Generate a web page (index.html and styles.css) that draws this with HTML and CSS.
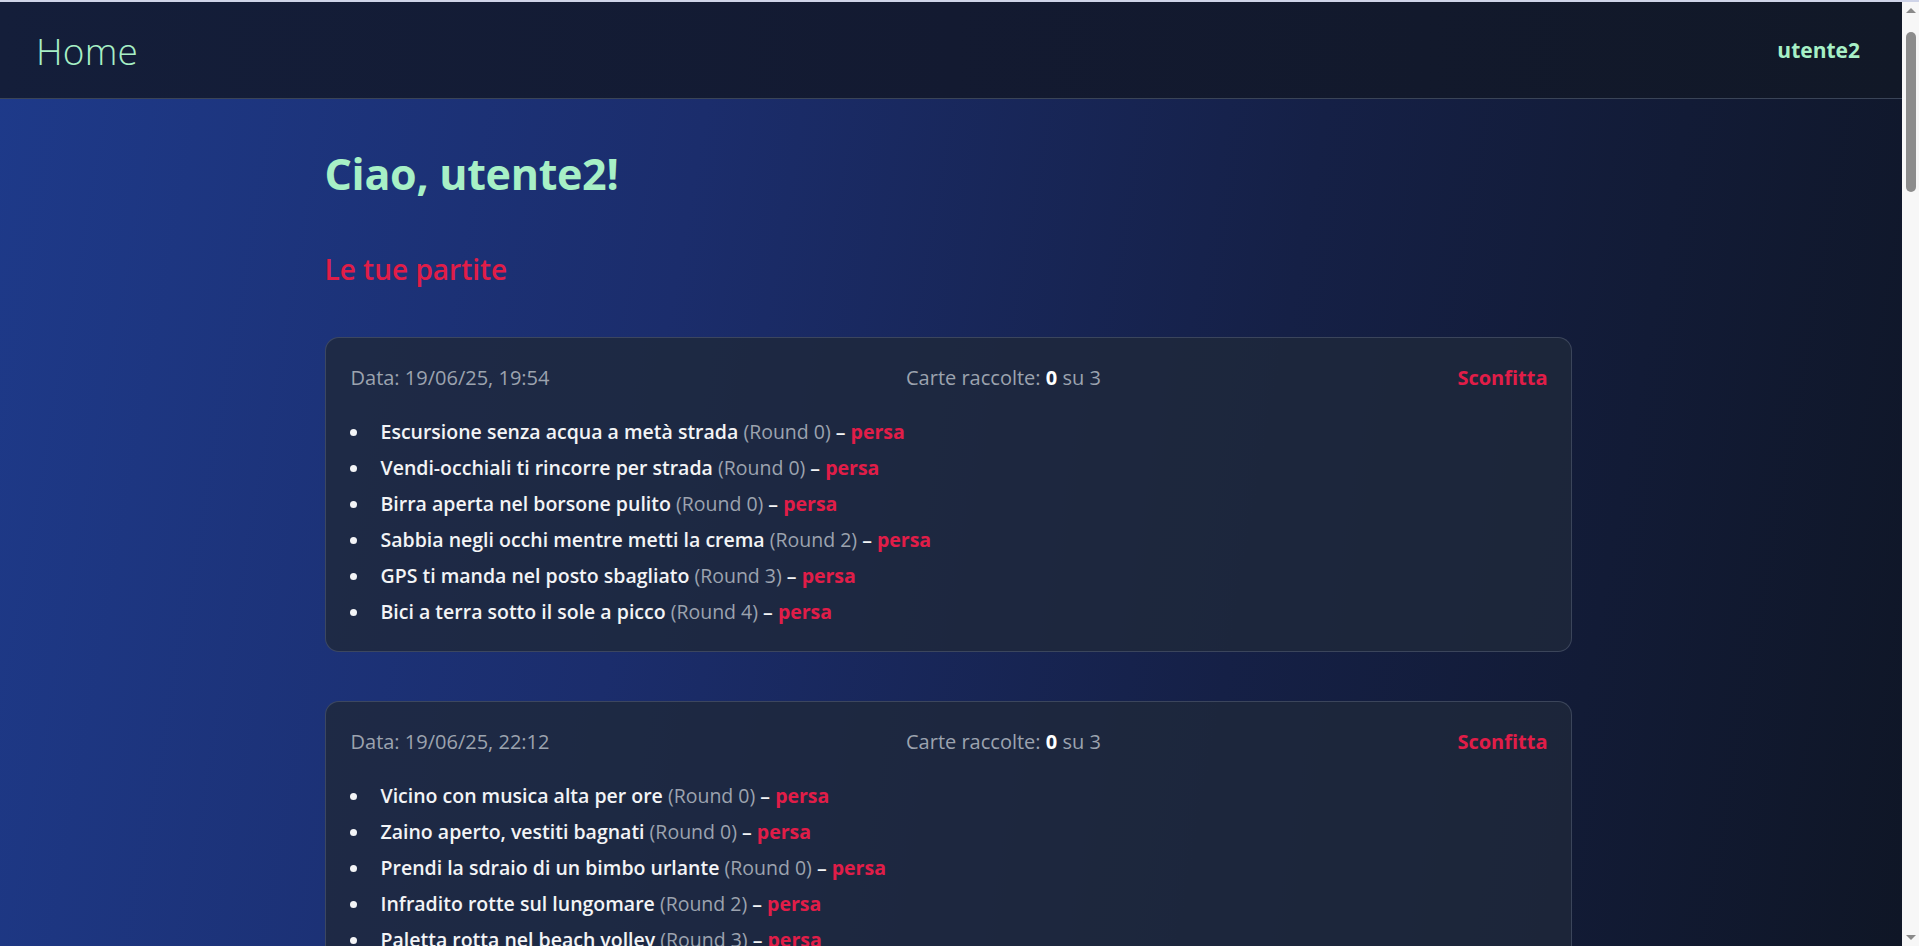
FILE: index.html
```html
<!DOCTYPE html>
<html lang="it">
<head>
<meta charset="utf-8">
<title>Home</title>
<link rel="stylesheet" href="styles.css">
</head>
<body>
<div class="app">
<header class="topbar">
  <a class="brand" href="#">Home</a>
  <span class="user">utente2</span>
</header>
<main class="container">
  <h1 class="title">Ciao, utente2!</h1>
  <h2 class="subtitle">Le tue partite</h2>

  <section class="game">
    <div class="game-head">
      <span class="muted">Data: 19/06/25, 19:54</span>
      <span class="muted">Carte raccolte: <b class="count">0</b> su 3</span>
      <span class="result">Sconfitta</span>
    </div>
    <ul class="cards">
      <li>Escursione senza acqua a metà strada <span class="round">(Round 0)</span> – <span class="lost">persa</span></li>
      <li>Vendi-occhiali ti rincorre per strada <span class="round">(Round 0)</span> – <span class="lost">persa</span></li>
      <li>Birra aperta nel borsone pulito <span class="round">(Round 0)</span> – <span class="lost">persa</span></li>
      <li>Sabbia negli occhi mentre metti la crema <span class="round">(Round 2)</span> – <span class="lost">persa</span></li>
      <li>GPS ti manda nel posto sbagliato <span class="round">(Round 3)</span> – <span class="lost">persa</span></li>
      <li>Bici a terra sotto il sole a picco <span class="round">(Round 4)</span> – <span class="lost">persa</span></li>
    </ul>
  </section>

  <section class="game">
    <div class="game-head">
      <span class="muted">Data: 19/06/25, 22:12</span>
      <span class="muted">Carte raccolte: <b class="count">0</b> su 3</span>
      <span class="result">Sconfitta</span>
    </div>
    <ul class="cards">
      <li>Vicino con musica alta per ore <span class="round">(Round 0)</span> – <span class="lost">persa</span></li>
      <li>Zaino aperto, vestiti bagnati <span class="round">(Round 0)</span> – <span class="lost">persa</span></li>
      <li>Prendi la sdraio di un bimbo urlante <span class="round">(Round 0)</span> – <span class="lost">persa</span></li>
      <li>Infradito rotte sul lungomare <span class="round">(Round 2)</span> – <span class="lost">persa</span></li>
      <li>Paletta rotta nel beach volley <span class="round">(Round 3)</span> – <span class="lost">persa</span></li>
      <li>Ombrellone volato via col vento <span class="round">(Round 4)</span> – <span class="lost">persa</span></li>
    </ul>
  </section>

  <section class="game">
    <div class="game-head">
      <span class="muted">Data: 20/06/25, 10:03</span>
      <span class="muted">Carte raccolte: <b class="count">0</b> su 3</span>
      <span class="result">Sconfitta</span>
    </div>
    <ul class="cards">
      <li>Treno cancellato all'ultimo minuto <span class="round">(Round 0)</span> – <span class="lost">persa</span></li>
      <li>Scottatura dopo il primo giorno <span class="round">(Round 0)</span> – <span class="lost">persa</span></li>
      <li>Medusa durante il bagno al tramonto <span class="round">(Round 0)</span> – <span class="lost">persa</span></li>
      <li>Gelato caduto sulla sabbia <span class="round">(Round 2)</span> – <span class="lost">persa</span></li>
      <li>Telefono bagnato in riva al mare <span class="round">(Round 3)</span> – <span class="lost">persa</span></li>
      <li>Parcheggio introvabile in centro <span class="round">(Round 4)</span> – <span class="lost">persa</span></li>
    </ul>
  </section>

  <section class="game">
    <div class="game-head">
      <span class="muted">Data: 20/06/25, 18:41</span>
      <span class="muted">Carte raccolte: <b class="count">0</b> su 3</span>
      <span class="result">Sconfitta</span>
    </div>
    <ul class="cards">
      <li>Zanzare tutta la notte in tenda <span class="round">(Round 0)</span> – <span class="lost">persa</span></li>
      <li>Valigia persa all'aeroporto <span class="round">(Round 0)</span> – <span class="lost">persa</span></li>
      <li>Temporale improvviso in spiaggia <span class="round">(Round 0)</span> – <span class="lost">persa</span></li>
      <li>Aria condizionata rotta in hotel <span class="round">(Round 2)</span> – <span class="lost">persa</span></li>
      <li>Coda infinita al traghetto <span class="round">(Round 3)</span> – <span class="lost">persa</span></li>
      <li>Crema solare finita a metà vacanza <span class="round">(Round 4)</span> – <span class="lost">persa</span></li>
    </ul>
  </section>

  <section class="game">
    <div class="game-head">
      <span class="muted">Data: 21/06/25, 09:15</span>
      <span class="muted">Carte raccolte: <b class="count">0</b> su 3</span>
      <span class="result">Sconfitta</span>
    </div>
    <ul class="cards">
      <li>Escursione senza acqua a metà strada <span class="round">(Round 0)</span> – <span class="lost">persa</span></li>
      <li>Birra aperta nel borsone pulito <span class="round">(Round 0)</span> – <span class="lost">persa</span></li>
      <li>GPS ti manda nel posto sbagliato <span class="round">(Round 0)</span> – <span class="lost">persa</span></li>
      <li>Vicino con musica alta per ore <span class="round">(Round 2)</span> – <span class="lost">persa</span></li>
      <li>Infradito rotte sul lungomare <span class="round">(Round 3)</span> – <span class="lost">persa</span></li>
      <li>Zaino aperto, vestiti bagnati <span class="round">(Round 4)</span> – <span class="lost">persa</span></li>
    </ul>
  </section>

  <section class="game">
    <div class="game-head">
      <span class="muted">Data: 21/06/25, 16:27</span>
      <span class="muted">Carte raccolte: <b class="count">0</b> su 3</span>
      <span class="result">Sconfitta</span>
    </div>
    <ul class="cards">
      <li>Sabbia negli occhi mentre metti la crema <span class="round">(Round 0)</span> – <span class="lost">persa</span></li>
      <li>Paletta rotta nel beach volley <span class="round">(Round 0)</span> – <span class="lost">persa</span></li>
      <li>Bici a terra sotto il sole a picco <span class="round">(Round 0)</span> – <span class="lost">persa</span></li>
      <li>Vendi-occhiali ti rincorre per strada <span class="round">(Round 2)</span> – <span class="lost">persa</span></li>
      <li>Prendi la sdraio di un bimbo urlante <span class="round">(Round 3)</span> – <span class="lost">persa</span></li>
      <li>Medusa durante il bagno al tramonto <span class="round">(Round 4)</span> – <span class="lost">persa</span></li>
    </ul>
  </section>

  <section class="game">
    <div class="game-head">
      <span class="muted">Data: 22/06/25, 11:02</span>
      <span class="muted">Carte raccolte: <b class="count">0</b> su 3</span>
      <span class="result">Sconfitta</span>
    </div>
    <ul class="cards">
      <li>Treno cancellato all'ultimo minuto <span class="round">(Round 0)</span> – <span class="lost">persa</span></li>
      <li>Gelato caduto sulla sabbia <span class="round">(Round 0)</span> – <span class="lost">persa</span></li>
      <li>Valigia persa all'aeroporto <span class="round">(Round 0)</span> – <span class="lost">persa</span></li>
      <li>Temporale improvviso in spiaggia <span class="round">(Round 2)</span> – <span class="lost">persa</span></li>
      <li>Coda infinita al traghetto <span class="round">(Round 3)</span> – <span class="lost">persa</span></li>
      <li>Telefono bagnato in riva al mare <span class="round">(Round 4)</span> – <span class="lost">persa</span></li>
    </ul>
  </section>

  <section class="game">
    <div class="game-head">
      <span class="muted">Data: 22/06/25, 20:48</span>
      <span class="muted">Carte raccolte: <b class="count">0</b> su 3</span>
      <span class="result">Sconfitta</span>
    </div>
    <ul class="cards">
      <li>Zanzare tutta la notte in tenda <span class="round">(Round 0)</span> – <span class="lost">persa</span></li>
      <li>Scottatura dopo il primo giorno <span class="round">(Round 0)</span> – <span class="lost">persa</span></li>
      <li>Parcheggio introvabile in centro <span class="round">(Round 0)</span> – <span class="lost">persa</span></li>
      <li>Aria condizionata rotta in hotel <span class="round">(Round 2)</span> – <span class="lost">persa</span></li>
      <li>Ombrellone volato via col vento <span class="round">(Round 3)</span> – <span class="lost">persa</span></li>
      <li>Crema solare finita a metà vacanza <span class="round">(Round 4)</span> – <span class="lost">persa</span></li>
    </ul>
  </section>

  <section class="game">
    <div class="game-head">
      <span class="muted">Data: 23/06/25, 14:36</span>
      <span class="muted">Carte raccolte: <b class="count">0</b> su 3</span>
      <span class="result">Sconfitta</span>
    </div>
    <ul class="cards">
      <li>Escursione senza acqua a metà strada <span class="round">(Round 0)</span> – <span class="lost">persa</span></li>
      <li>Vicino con musica alta per ore <span class="round">(Round 0)</span> – <span class="lost">persa</span></li>
      <li>Birra aperta nel borsone pulito <span class="round">(Round 0)</span> – <span class="lost">persa</span></li>
      <li>Infradito rotte sul lungomare <span class="round">(Round 2)</span> – <span class="lost">persa</span></li>
      <li>GPS ti manda nel posto sbagliato <span class="round">(Round 3)</span> – <span class="lost">persa</span></li>
      <li>Paletta rotta nel beach volley <span class="round">(Round 4)</span> – <span class="lost">persa</span></li>
    </ul>
  </section>

  <section class="game">
    <div class="game-head">
      <span class="muted">Data: 24/06/25, 08:59</span>
      <span class="muted">Carte raccolte: <b class="count">0</b> su 3</span>
      <span class="result">Sconfitta</span>
    </div>
    <ul class="cards">
      <li>Zaino aperto, vestiti bagnati <span class="round">(Round 0)</span> – <span class="lost">persa</span></li>
      <li>Sabbia negli occhi mentre metti la crema <span class="round">(Round 0)</span> – <span class="lost">persa</span></li>
      <li>Prendi la sdraio di un bimbo urlante <span class="round">(Round 0)</span> – <span class="lost">persa</span></li>
      <li>Bici a terra sotto il sole a picco <span class="round">(Round 2)</span> – <span class="lost">persa</span></li>
      <li>Vendi-occhiali ti rincorre per strada <span class="round">(Round 3)</span> – <span class="lost">persa</span></li>
      <li>Gelato caduto sulla sabbia <span class="round">(Round 4)</span> – <span class="lost">persa</span></li>
    </ul>
  </section>

  <section class="game">
    <div class="game-head">
      <span class="muted">Data: 24/06/25, 21:10</span>
      <span class="muted">Carte raccolte: <b class="count">0</b> su 3</span>
      <span class="result">Sconfitta</span>
    </div>
    <ul class="cards">
      <li>Medusa durante il bagno al tramonto <span class="round">(Round 0)</span> – <span class="lost">persa</span></li>
      <li>Treno cancellato all'ultimo minuto <span class="round">(Round 0)</span> – <span class="lost">persa</span></li>
      <li>Valigia persa all'aeroporto <span class="round">(Round 0)</span> – <span class="lost">persa</span></li>
      <li>Coda infinita al traghetto <span class="round">(Round 2)</span> – <span class="lost">persa</span></li>
      <li>Scottatura dopo il primo giorno <span class="round">(Round 3)</span> – <span class="lost">persa</span></li>
      <li>Temporale improvviso in spiaggia <span class="round">(Round 4)</span> – <span class="lost">persa</span></li>
    </ul>
  </section>

  <section class="game">
    <div class="game-head">
      <span class="muted">Data: 25/06/25, 17:44</span>
      <span class="muted">Carte raccolte: <b class="count">0</b> su 3</span>
      <span class="result">Sconfitta</span>
    </div>
    <ul class="cards">
      <li>Telefono bagnato in riva al mare <span class="round">(Round 0)</span> – <span class="lost">persa</span></li>
      <li>Zanzare tutta la notte in tenda <span class="round">(Round 0)</span> – <span class="lost">persa</span></li>
      <li>Parcheggio introvabile in centro <span class="round">(Round 0)</span> – <span class="lost">persa</span></li>
      <li>Ombrellone volato via col vento <span class="round">(Round 2)</span> – <span class="lost">persa</span></li>
      <li>Aria condizionata rotta in hotel <span class="round">(Round 3)</span> – <span class="lost">persa</span></li>
      <li>Crema solare finita a metà vacanza <span class="round">(Round 4)</span> – <span class="lost">persa</span></li>
    </ul>
  </section>

  <section class="game">
    <div class="game-head">
      <span class="muted">Data: 26/06/25, 12:30</span>
      <span class="muted">Carte raccolte: <b class="count">0</b> su 3</span>
      <span class="result">Sconfitta</span>
    </div>
    <ul class="cards">
      <li>Escursione senza acqua a metà strada <span class="round">(Round 0)</span> – <span class="lost">persa</span></li>
      <li>Vendi-occhiali ti rincorre per strada <span class="round">(Round 0)</span> – <span class="lost">persa</span></li>
      <li>Vicino con musica alta per ore <span class="round">(Round 0)</span> – <span class="lost">persa</span></li>
      <li>Sabbia negli occhi mentre metti la crema <span class="round">(Round 2)</span> – <span class="lost">persa</span></li>
      <li>Infradito rotte sul lungomare <span class="round">(Round 3)</span> – <span class="lost">persa</span></li>
      <li>Bici a terra sotto il sole a picco <span class="round">(Round 4)</span> – <span class="lost">persa</span></li>
    </ul>
  </section>

  <section class="game">
    <div class="game-head">
      <span class="muted">Data: 27/06/25, 19:05</span>
      <span class="muted">Carte raccolte: <b class="count">0</b> su 3</span>
      <span class="result">Sconfitta</span>
    </div>
    <ul class="cards">
      <li>Zaino aperto, vestiti bagnati <span class="round">(Round 0)</span> – <span class="lost">persa</span></li>
      <li>GPS ti manda nel posto sbagliato <span class="round">(Round 0)</span> – <span class="lost">persa</span></li>
      <li>Birra aperta nel borsone pulito <span class="round">(Round 0)</span> – <span class="lost">persa</span></li>
      <li>Paletta rotta nel beach volley <span class="round">(Round 2)</span> – <span class="lost">persa</span></li>
      <li>Prendi la sdraio di un bimbo urlante <span class="round">(Round 3)</span> – <span class="lost">persa</span></li>
      <li>Gelato caduto sulla sabbia <span class="round">(Round 4)</span> – <span class="lost">persa</span></li>
    </ul>
  </section>
</main>
</div>
<div class="scrollbar" aria-hidden="true">
  <span class="arrow-up"></span>
  <span class="thumb"></span>
  <span class="track-fill"></span>
  <span class="arrow-down"></span>
</div>
</body>
</html>
```

FILE: styles.css
```css
html,
body {
  height: 100%;
}

body {
  margin: 0;
  display: flex;
  overflow: hidden;
  font-family: "Open Sans", "Noto Sans", "Liberation Sans", sans-serif;
  font-size: 20px;
  line-height: 30px;
  color: #f3f4f6;
  background: #111827;
}

.app {
  flex: 1;
  height: 100vh;
  overflow-y: auto;
  scrollbar-width: none;
  background: linear-gradient(100deg, #1e3a8a 0%, #1b2d6c 35%, #152046 65%, #0f1626 100%);
}

.app::-webkit-scrollbar {
  display: none;
}

/* simulated browser scrollbar */
.scrollbar {
  width: 17px;
  flex: none;
  height: 100vh;
  display: flex;
  flex-direction: column;
  align-items: center;
  background: #f7f7f7;
  border-top: 2px solid #cfd4e8;
  box-sizing: border-box;
}

.arrow-up,
.arrow-down {
  flex: none;
  width: 0;
  height: 0;
  border-left: 5px solid transparent;
  border-right: 5px solid transparent;
}

.arrow-up {
  margin-top: 6px;
  border-bottom: 5px solid #8a8a8a;
}

.arrow-down {
  margin-bottom: 6px;
  border-top: 5px solid #8a8a8a;
}

.thumb {
  flex: none;
  width: 10px;
  height: 160px;
  margin-top: 19px;
  border-radius: 5px;
  background: #8c8c8c;
}

.track-fill {
  flex: 1;
}

.topbar {
  display: flex;
  align-items: center;
  justify-content: space-between;
  height: 96px;
  padding: 0 42px 0 36px;
  border-top: 2px solid #cfd4e8;
  border-bottom: 1px solid #3a4457;
  background: linear-gradient(90deg, #141e3a 0%, #131a31 50%, #111827 100%);
}

.brand {
  font-size: 37px;
  font-weight: 350;
  line-height: 1;
  color: #a7f0c6;
  text-decoration: none;
  letter-spacing: 0.2px;
}

.user {
  font-size: 21px;
  font-weight: 700;
  color: #a7f0c6;
}

.container {
  max-width: 1247px;
  margin: 48px auto 0;
  padding-bottom: 48px;
  transform: translateX(-3px);
}

.title {
  margin: 0;
  font-size: 43px;
  line-height: 54px;
  font-weight: 700;
  color: #a7f0c6;
  letter-spacing: -0.3px;
}

.subtitle {
  margin: 53px 0 53px;
  font-size: 28px;
  line-height: 30px;
  font-weight: 600;
  color: #e11d48;
}

.game {
  margin-bottom: 49px;
  padding: 25px 23px 24px 25px;
  border: 1px solid rgba(85, 97, 118, 0.55);
  border-radius: 14px;
  background: rgba(30, 40, 58, 0.82);
}

.game-head {
  display: flex;
  justify-content: space-between;
  align-items: center;
  font-size: 20px;
}

.muted {
  color: #9ca3af;
}

.count {
  color: #ffffff;
  font-weight: 700;
}

.result {
  color: #e11d48;
  font-weight: 700;
}

.cards {
  margin: 24px 0 0;
  padding-left: 30px;
  list-style: none;
}

.cards li {
  margin-bottom: 6px;
  font-weight: 600;
  font-size: 19.5px;
  color: #f3f4f6;
}

.cards li::before {
  content: "";
  display: inline-block;
  width: 7px;
  height: 7px;
  margin-left: -31px;
  margin-right: 24px;
  border-radius: 50%;
  background: #f3f4f6;
  vertical-align: 3px;
}

.cards li:last-child {
  margin-bottom: 0;
}

.round {
  color: #9ca3af;
  font-weight: 400;
}

.lost {
  color: #e11d48;
  font-weight: 700;
}
```
